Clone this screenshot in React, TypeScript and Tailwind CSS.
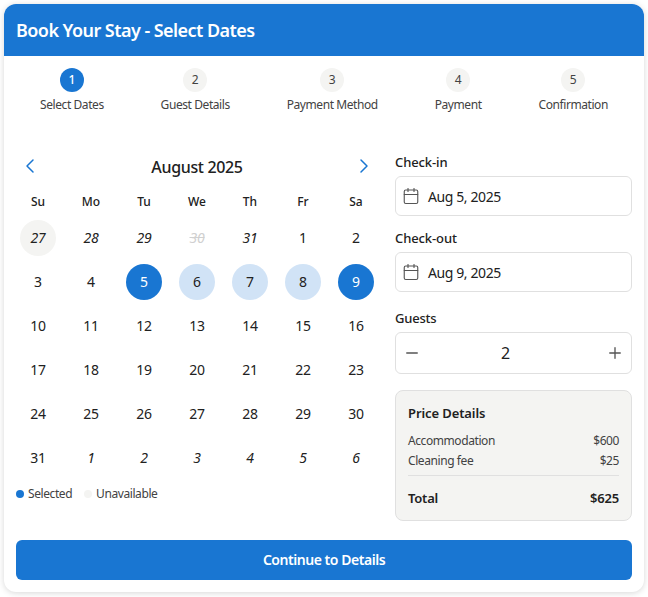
import React from 'react';
import { Calendar, ChevronLeft, ChevronRight, Minus, Plus } from 'lucide-react';

const steps = ['Select Dates', 'Guest Details', 'Payment Method', 'Payment', 'Confirmation'];
const weekdays = ['Su', 'Mo', 'Tu', 'We', 'Th', 'Fr', 'Sa'];

type Day = { label: number; outside?: boolean; disabled?: boolean; today?: boolean; edge?: boolean; range?: boolean };

const weeks: Day[][] = [
    [
        { label: 27, outside: true, today: true },
        { label: 28, outside: true },
        { label: 29, outside: true },
        { label: 30, outside: true, disabled: true },
        { label: 31, outside: true },
        { label: 1 },
        { label: 2 },
    ],
    [
        { label: 3 },
        { label: 4 },
        { label: 5, edge: true },
        { label: 6, range: true },
        { label: 7, range: true },
        { label: 8, range: true },
        { label: 9, edge: true },
    ],
    [10, 11, 12, 13, 14, 15, 16].map((label) => ({ label })),
    [17, 18, 19, 20, 21, 22, 23].map((label) => ({ label })),
    [24, 25, 26, 27, 28, 29, 30].map((label) => ({ label })),
    [
        { label: 31 },
        { label: 1, outside: true },
        { label: 2, outside: true },
        { label: 3, outside: true },
        { label: 4, outside: true },
        { label: 5, outside: true },
        { label: 6, outside: true },
    ],
];

function DayCell({ day }: { day: Day }) {
    let tone = 'text-[#212121]';
    if (day.edge) tone = 'bg-[#1976d2] text-white';
    if (day.range) tone = 'bg-[#d1e3f6] text-[#212121]';
    if (day.today) tone = 'bg-[#f4f4f2] text-[#212121]';
    if (day.disabled) tone = 'text-[#d0d0d0] line-through';

    return (
        <div className="w-11 h-11 flex items-center justify-center">
            <div className={`w-9 h-9 rounded-full flex items-center justify-center text-sm tracking-[-0.2px] ${tone} ${day.outside ? 'italic' : ''}`}>
                {day.label}
            </div>
        </div>
    );
}

function DateField({ label, value }: { label: string; value: string }) {
    return (
        <div>
            <div className="text-[13px] leading-5 font-medium text-[#212121] mb-1 tracking-[-0.1px]">{label}</div>
            <div className="h-10 border border-[#e0e0e0] rounded-md flex items-center pl-1.5 gap-2">
                <Calendar size={18} strokeWidth={1.5} className="text-[#555]" />
                <span className="text-sm text-[#212121] tracking-[-0.4px] pt-0.5">{value}</span>
            </div>
        </div>
    );
}

export default function App() {
    return (
        <div className="h-[597px] bg-white p-1 font-['Noto_Sans',sans-serif]">
            <div className="h-[588px] w-[640px] bg-white rounded-xl shadow-[0_1px_6px_rgba(0,0,0,0.16)] overflow-hidden">
                <div className="h-[52px] bg-[#1976d2] px-3 flex items-center">
                    <h1 className="text-lg font-semibold text-white tracking-[-0.55px]">Book Your Stay - Select Dates</h1>
                </div>

                <div className="flex justify-between px-9 pt-3">
                    {steps.map((step, i) => (
                        <div key={step} className="flex flex-col items-center">
                            <div className={`w-6 h-6 rounded-full flex items-center justify-center text-xs ${i === 0 ? 'bg-[#1976d2] text-white font-medium' : 'bg-[#f4f4f2] text-[#424242]'}`}>
                                {i + 1}
                            </div>
                            <div className="text-xs leading-4 mt-[5px] text-[#424242] tracking-[-0.42px] whitespace-nowrap">{step}</div>
                        </div>
                    ))}
                </div>

                <div className="flex gap-[17px] px-3 mt-[39px]">
                    <div className="w-[362px]">
                        <div className="flex items-center justify-between h-6 mt-[3px]">
                            <ChevronLeft size={24} strokeWidth={1.5} className="text-[#1976d2] ml-0.5 mb-0.5" />
                            <div className="text-base font-medium text-[#212121] tracking-[-0.35px]">August 2025</div>
                            <ChevronRight size={24} strokeWidth={1.5} className="text-[#1976d2] mr-0.5 mb-0.5" />
                        </div>
                        <div className="flex justify-between mt-[13px]">
                            {weekdays.map((d) => (
                                <div key={d} className="w-11 h-5 text-center text-xs leading-5 font-medium text-[#212121]">{d}</div>
                            ))}
                        </div>
                        <div className="mt-1">
                            {weeks.map((week, i) => (
                                <div key={i} className="flex justify-between">
                                    {week.map((day, j) => (
                                        <DayCell key={j} day={day} />
                                    ))}
                                </div>
                            ))}
                        </div>
                        <div className="flex items-center gap-3 mt-1.5 text-xs leading-4 text-[#424242] tracking-[-0.42px]">
                            <div className="flex items-center gap-1">
                                <span className="w-2 h-2 rounded-full bg-[#1976d2]" />
                                Selected
                            </div>
                            <div className="flex items-center gap-1">
                                <span className="w-2 h-2 rounded-full bg-[#f4f4f2]" />
                                Unavailable
                            </div>
                        </div>
                    </div>

                    <div className="flex-1">
                        <div className="flex flex-col gap-3">
                            <DateField label="Check-in" value="Aug 5, 2025" />
                            <DateField label="Check-out" value="Aug 9, 2025" />
                        </div>
                        <div className="text-[13px] leading-5 font-medium text-[#212121] mt-4 mb-1 tracking-[-0.2px]">Guests</div>
                        <div className="h-[42px] border border-[#e0e0e0] rounded-md flex items-center justify-between px-[7px]">
                            <Minus size={18} strokeWidth={1.8} className="text-[#555]" />
                            <span className="text-base text-[#212121] mr-4">2</span>
                            <Plus size={18} strokeWidth={1.8} className="text-[#555]" />
                        </div>
                        <div className="mt-4 h-[131px] bg-[#f4f4f2] border border-[#e0e0e0] rounded-lg px-3 pt-3">
                            <div className="text-[13px] leading-5 font-semibold text-[#212121] tracking-[-0.1px]">Price Details</div>
                            <div className="flex justify-between text-xs leading-5 text-[#424242] mt-2 tracking-[-0.42px]">
                                <span>Accommodation</span>
                                <span>$600</span>
                            </div>
                            <div className="flex justify-between text-xs leading-5 text-[#424242] tracking-[-0.42px]">
                                <span>Cleaning fee</span>
                                <span>$25</span>
                            </div>
                            <div className="border-t border-[#e0e0e0] mt-1 pt-3 flex justify-between text-[13px] leading-5 font-semibold text-[#212121] tracking-[-0.2px]">
                                <span>Total</span>
                                <span>$625</span>
                            </div>
                        </div>
                    </div>
                </div>

                <div className="px-3 mt-[19px]">
                    <button className="w-full h-10 bg-[#1976d2] rounded-md text-white text-sm font-semibold tracking-[-0.46px]">Continue to Details</button>
                </div>
            </div>
        </div>
    );
}
